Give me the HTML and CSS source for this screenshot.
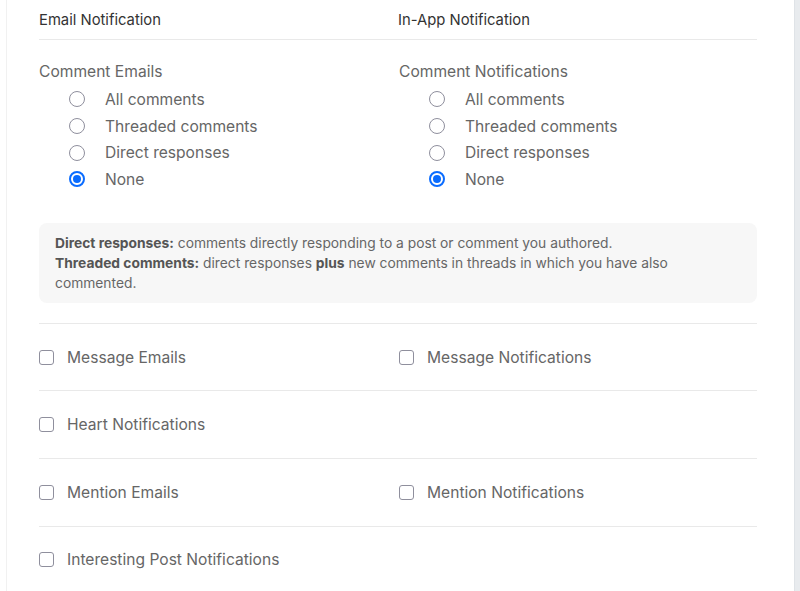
FILE: index.html
```html
<!DOCTYPE html>
<html>
<head>
<meta charset="utf-8">
<link rel="stylesheet" href="styles.css">
</head>
<body>
<div class="page">
  <div class="card">
    <div class="head-row">
      <div class="col head">Email Notification</div>
      <div class="col head">In-App Notification</div>
    </div>
    <div class="comments-row">
      <div class="col">
        <div class="group-title">Comment Emails</div>
        <label class="radio"><span class="rb"></span><span>All comments</span></label>
        <label class="radio"><span class="rb"></span><span>Threaded comments</span></label>
        <label class="radio"><span class="rb"></span><span>Direct responses</span></label>
        <label class="radio"><span class="rb on"></span><span>None</span></label>
      </div>
      <div class="col">
        <div class="group-title">Comment Notifications</div>
        <label class="radio"><span class="rb"></span><span>All comments</span></label>
        <label class="radio"><span class="rb"></span><span>Threaded comments</span></label>
        <label class="radio"><span class="rb"></span><span>Direct responses</span></label>
        <label class="radio"><span class="rb on"></span><span>None</span></label>
      </div>
    </div>
    <div class="info">
      <p><b>Direct responses:</b> comments directly responding to a post or comment you authored.</p>
      <p><b>Threaded comments:</b> direct responses <b>plus</b> new comments in threads in which you have also commented.</p>
    </div>
    <div class="check-row first">
      <div class="col"><label class="check"><span class="cb"></span><span>Message Emails</span></label></div>
      <div class="col"><label class="check"><span class="cb"></span><span>Message Notifications</span></label></div>
    </div>
    <div class="check-row">
      <div class="col"><label class="check"><span class="cb"></span><span>Heart Notifications</span></label></div>
      <div class="col"></div>
    </div>
    <div class="check-row">
      <div class="col"><label class="check"><span class="cb"></span><span>Mention Emails</span></label></div>
      <div class="col"><label class="check"><span class="cb"></span><span>Mention Notifications</span></label></div>
    </div>
    <div class="check-row">
      <div class="col"><label class="check"><span class="cb"></span><span>Interesting Post Notifications</span></label></div>
      <div class="col"></div>
    </div>
  </div>
  <div class="side"></div>
</div>
</body>
</html>
```

FILE: styles.css
```css
* { box-sizing: border-box; }
html, body { margin: 0; padding: 0; background: #fff; }
body {
  font-family: Inter, "Liberation Sans", sans-serif;
  color: #666;
  overflow: hidden;
  height: 591px;
}
.page {
  display: flex;
  height: 591px;
  padding-left: 6px;
}
.card {
  flex: 1;
  border-left: 1px solid #f1f1f1;
  padding: 0 37px 0 32px;
  background: #fff;
}
.side {
  width: 6px;
  background: #e8ebee;
  border-left: 1px solid #dfe3e7;
}
.head-row, .comments-row, .check-row {
  display: grid;
  grid-template-columns: 360px 1fr;
}
.head-row {
  height: 40px;
  padding-top: 1px;
  border-bottom: 1px solid #e9e9e9;
  align-items: center;
}
.head {
  font-size: 14.8px;
  color: #333;
}
.head-row .col:last-child { margin-left: -1px; }
.comments-row {
  padding-top: 22px;
}
.group-title {
  font-size: 15.6px;
  line-height: 20px;
  color: #666;
  margin-bottom: 4px;
}
.radio {
  display: flex;
  align-items: center;
  height: 26.7px;
  font-size: 15.6px;
  padding-left: 30px;
}
.rb {
  width: 16px;
  height: 16px;
  border: 1px solid #8f8f9d;
  border-radius: 50%;
  margin-right: 20px;
  flex: none;
  position: relative;
}
.rb.on {
  border: 2px solid #0a6cff;
}
.rb.on::after {
  content: "";
  position: absolute;
  left: 2px; top: 2px;
  width: 8px; height: 8px;
  border-radius: 50%;
  background: #0a6cff;
}
.info {
  margin-top: 30px;
  background: #f7f7f7;
  border-radius: 8px;
  padding: 10px 36px 10px 16px;
  font-size: 13.8px;
  line-height: 20px;
  color: #666;
}
.info p { margin: 0; }
.info b { font-weight: 700; color: #555; }
.check-row {
  height: 67.6px;
  border-top: 1px solid #e9e9e9;
  align-items: center;
}
.check-row.first { margin-top: 20px; }
.check {
  display: flex;
  align-items: center;
  font-size: 15.6px;
}
.cb {
  width: 15px;
  height: 15px;
  border: 1px solid #8f8f9d;
  border-radius: 3px;
  margin-right: 13px;
  flex: none;
}
```
